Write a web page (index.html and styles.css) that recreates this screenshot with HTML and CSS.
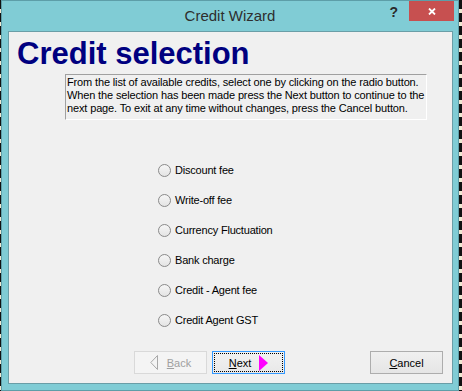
FILE: index.html
```html
<!DOCTYPE html>
<html lang="en">
  <head>
    <meta charset="UTF-8" />
    <title>Credit Wizard</title>
    <link rel="stylesheet" href="styles.css">
  </head>
  <body>
    <div class="window">
      <div class="titlebar">
        <span></span>
        <div class="title">Credit Wizard</div>
        <div class="controls">
          <span class="help">?</span>
          <button class="close">
            <svg width="8" height="7" viewBox="0 0 8 7"><path d="M1 0.5 L7 6.5 M7 0.5 L1 6.5" stroke="#fff" stroke-width="1.8" fill="none"/></svg>
          </button>
        </div>
      </div>
      <div class="client">
        <h1 class="heading">Credit selection</h1>
        <p class="intro">From the list of available credits, select one by clicking on the radio button.<br>When the selection has been made press the Next button to continue to the<br>next page. To exit at any time without changes, press the Cancel button.</p>
        <ul class="credit-list">
          <li><span class="radio"></span>Discount fee</li>
          <li><span class="radio"></span>Write-off fee</li>
          <li><span class="radio"></span>Currency Fluctuation</li>
          <li><span class="radio"></span>Bank charge</li>
          <li><span class="radio"></span>Credit - Agent fee</li>
          <li><span class="radio"></span>Credit Agent GST</li>
        </ul>
        <div class="buttons">
          <button class="btn btn-back" disabled>
            <svg width="9" height="15" viewBox="0 0 9 15"><path d="M7.5 0.5 L0.8 7.5 L7.5 14.5 Z" fill="none" stroke="#a8a8a8"/></svg>
            <span><u>B</u>ack</span>
          </button>
          <button class="btn btn-next">
            <span class="focus">
              <span><u>N</u>ext</span>
              <svg width="9" height="16" viewBox="0 0 9 16"><path d="M0 0 L9 8 L0 16 Z" fill="#ff00ff"/></svg>
            </span>
          </button>
          <span class="spacer"></span>
          <button class="btn btn-cancel"><u>C</u>ancel</button>
        </div>
      </div>
    </div>
  </body>
</html>
```

FILE: styles.css
```css
html, body {
  margin: 0;
  padding: 0;
}

body {
  width: 462px;
  height: 391px;
  background: repeating-linear-gradient(to bottom, #111 0 9px, #efe9d2 9px 13px);
  font-family: "Liberation Sans", Arial, sans-serif;
}

.window {
  box-sizing: border-box;
  width: 458px;
  height: 391px;
  margin-left: 1px;
  background: #80ccd5;
  border: 1px solid #5d9ea8;
  display: flex;
  flex-direction: column;
}

.titlebar {
  height: 30px;
  display: grid;
  grid-template-columns: 1fr auto 1fr;
}

.title {
  font-size: 15px;
  line-height: 30px;
  color: #2e2e2e;
}

.controls {
  justify-self: end;
  display: flex;
  align-items: flex-start;
  margin-right: 4px;
}

.help {
  font-size: 14px;
  font-weight: bold;
  line-height: 22px;
  color: #2a2a2a;
  margin-right: 11px;
}

.close {
  width: 45px;
  height: 20px;
  border: none;
  padding: 0;
  background: #c75050;
  display: flex;
  justify-content: center;
  align-items: center;
}

.client {
  flex: 1;
  margin: 0 5px 6px 6px;
  border: 1px solid #6a9ea7;
  background: #f0f0f0;
  display: flex;
  flex-direction: column;
}

.heading {
  margin: 5px 0 0 8px;
  font-family: "Liberation Sans", Arial, sans-serif;
  font-size: 31px;
  line-height: 34px;
  font-weight: bold;
  color: #000080;
}

.intro {
  box-sizing: border-box;
  width: 362px;
  height: 46px;
  margin: 3px 0 0 56px;
  padding: 1px 1px 0 1px;
  border: 1px solid #fff;
  border-top-color: #a0a0a0;
  border-left-color: #a0a0a0;
  font-size: 11px;
  line-height: 13px;
  letter-spacing: -0.14px;
  color: #000;
  white-space: nowrap;
}

.credit-list {
  list-style: none;
  margin: 35px 0 0 149px;
  padding: 0;
}

.credit-list li {
  height: 30px;
  display: flex;
  align-items: center;
  font-size: 11px;
  letter-spacing: -0.2px;
  color: #000;
}

.radio {
  box-sizing: border-box;
  width: 13px;
  height: 13px;
  border: 1px solid #8a8a8a;
  border-radius: 50%;
  background: linear-gradient(to bottom, #f6f6f6, #e4e4e4);
  margin-right: 4px;
}

.buttons {
  display: flex;
  margin: 16px 9px 0 125px;
}

.btn {
  box-sizing: border-box;
  width: 73px;
  height: 23px;
  padding: 0;
  font-family: "Liberation Sans", Arial, sans-serif;
  font-size: 11px;
  color: #000;
  border: 1px solid #adadad;
  background: linear-gradient(to bottom, #f0f0f0, #e5e5e5);
  display: flex;
  align-items: center;
  justify-content: center;
}

.btn-back {
  border-color: #d9d9d9;
  background: #f4f4f4;
  color: #a0a0a0;
  gap: 8px;
}

.btn-next {
  margin-left: 5px;
  border-color: #3399ff;
  background: linear-gradient(to bottom, #f2f2f2, #e8e8e8);
}

.btn-next .focus {
  box-sizing: border-box;
  width: 69px;
  height: 19px;
  border: 1px dotted #000;
  display: flex;
  align-items: center;
  justify-content: center;
  gap: 8px;
}

.spacer {
  flex: 1;
}
```
